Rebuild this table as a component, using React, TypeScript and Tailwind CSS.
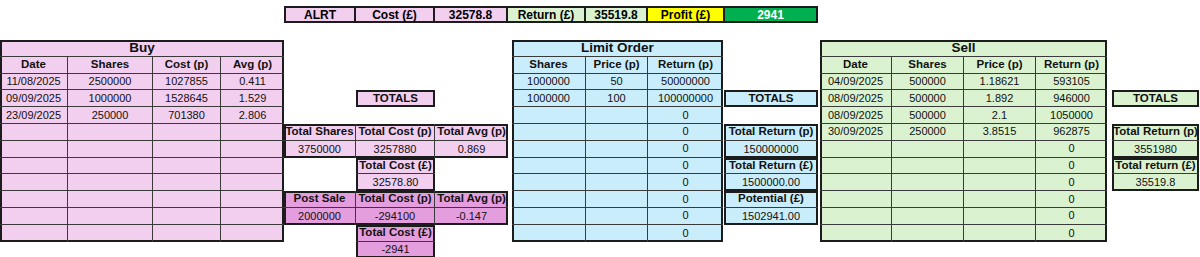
import React from "react";

type C = { t?: string; b?: boolean };

const PINK = "bg-[#f2ceef]";
const DPINK = "bg-[#e59edd]";
const BLUE = "bg-[#caedfb]";
const GREEN = "bg-[#daf2d0]";

function Box({
  cols,
  rows,
  bg,
  title,
  className = "",
}: {
  cols: string[];
  rows: C[][];
  bg: string;
  title?: string;
  className?: string;
}) {
  return (
    <div className={`${bg} shadow-[inset_0_0_0_2px_#1c1c1c] ${className}`}>
      {title && (
        <div className="flex h-[16.8px] items-center justify-center border-b border-[#3a3a3a] text-[13.5px] leading-none font-bold">
          {title}
        </div>
      )}
      {rows.map((r, i) => (
        <div
          key={i}
          className={`flex h-[16.8px] ${i < rows.length - 1 ? "border-b border-[#3a3a3a]" : ""}`}
        >
          {r.map((c, j) => (
            <div
              key={j}
              className={`${cols[j]} flex items-center justify-center overflow-hidden whitespace-nowrap leading-none ${
                j < r.length - 1 ? "border-r border-[#3a3a3a]" : ""
              } ${c.b ? "text-[11.5px] font-bold" : ""}`}
            >
              {c.t}
            </div>
          ))}
        </div>
      ))}
    </div>
  );
}

const v = (t = ""): C => ({ t });
const h = (t: string): C => ({ t, b: true });

const buyRows: C[][] = [
  [h("Date"), h("Shares"), h("Cost (p)"), h("Avg (p)")],
  [v("11/08/2025"), v("2500000"), v("1027855"), v("0.411")],
  [v("09/09/2025"), v("1000000"), v("1528645"), v("1.529")],
  [v("23/09/2025"), v("250000"), v("701380"), v("2.806")],
  ...Array.from({ length: 7 }, () => [v(), v(), v(), v()]),
];

const limitRows: C[][] = [
  [h("Shares"), h("Price (p)"), h("Return (p)")],
  [v("1000000"), v("50"), v("50000000")],
  [v("1000000"), v("100"), v("100000000")],
  ...Array.from({ length: 8 }, () => [v(), v(), v("0")]),
];

const sellRows: C[][] = [
  [h("Date"), h("Shares"), h("Price (p)"), h("Return (p)")],
  [v("04/09/2025"), v("500000"), v("1.18621"), v("593105")],
  [v("08/09/2025"), v("500000"), v("1.892"), v("946000")],
  [v("08/09/2025"), v("500000"), v("2.1"), v("1050000")],
  [v("30/09/2025"), v("250000"), v("3.8515"), v("962875")],
  ...Array.from({ length: 6 }, () => [v(), v(), v(), v("0")]),
];

function TopCell({
  w,
  bg,
  text,
  last,
  white,
}: {
  w: string;
  bg: string;
  text: string;
  last?: boolean;
  white?: boolean;
}) {
  return (
    <div
      className={`${w} ${bg} flex items-center justify-center leading-none ${
        last ? "" : "border-r-2 border-[#1c1c1c]"
      } ${white ? "text-white" : "text-black"}`}
    >
      {text}
    </div>
  );
}

export default function App() {
  return (
    <div className="h-[257px] w-[1200px] overflow-hidden bg-white pt-[6.4px] font-['Liberation_Sans',Arial,sans-serif] text-[11px] text-[#111]">
      {/* Top summary bar */}
      <div className="ml-[284px] flex h-[16.8px] w-[534px] border-2 border-[#1c1c1c] text-[12px] font-bold">
        <TopCell w="w-[70px]" bg={PINK} text="ALRT" />
        <TopCell w="w-[79px]" bg={PINK} text="Cost (£)" />
        <TopCell w="w-[73px]" bg={PINK} text="32578.8" />
        <TopCell w="w-[78px]" bg={GREEN} text="Return (£)" />
        <TopCell w="w-[62px]" bg={GREEN} text="35519.8" />
        <TopCell w="w-[77px]" bg="bg-[#ffff00]" text="Profit (£)" />
        <TopCell w="flex-1" bg="bg-[#00b050]" text="2941" last white />
      </div>

      <div className="h-[16.8px]" />

      <div className="flex items-start">
        {/* Buy */}
        <Box
          className="w-[284px]"
          bg={PINK}
          title="Buy"
          cols={["w-[68px]", "w-[85px]", "w-[68px]", "flex-1"]}
          rows={buyRows}
        />

        {/* Buy totals */}
        <div className="flex w-[224px] flex-col">
          <div className="h-[50.4px]" />
          <Box
            className="ml-[72px] w-[79px]"
            bg={PINK}
            cols={["flex-1"]}
            rows={[[h("TOTALS")]]}
          />
          <div className="h-[16.8px]" />
          <Box
            className="w-[224px]"
            bg={PINK}
            cols={["w-[72px]", "w-[79px]", "flex-1"]}
            rows={[
              [h("Total Shares"), h("Total Cost (p)"), h("Total Avg (p)")],
              [v("3750000"), v("3257880"), v("0.869")],
            ]}
          />
          <Box
            className="ml-[72px] w-[79px]"
            bg={PINK}
            cols={["flex-1"]}
            rows={[[h("Total Cost (£)")], [v("32578.80")]]}
          />
          <Box
            className="w-[224px]"
            bg={DPINK}
            cols={["w-[72px]", "w-[79px]", "flex-1"]}
            rows={[
              [h("Post Sale"), h("Total Cost (p)"), h("Total Avg (p)")],
              [v("2000000"), v("-294100"), v("-0.147")],
            ]}
          />
          <Box
            className="ml-[72px] w-[79px]"
            bg={DPINK}
            cols={["flex-1"]}
            rows={[[h("Total Cost (£)")], [v("-2941")]]}
          />
        </div>

        <div className="w-[4px]" />

        {/* Limit Order */}
        <Box
          className="w-[211px]"
          bg={BLUE}
          title="Limit Order"
          cols={["w-[74px]", "w-[62px]", "flex-1"]}
          rows={limitRows}
        />

        {/* Limit totals */}
        <div className="flex w-[95px] flex-col pl-[1px]">
          <div className="h-[50.4px]" />
          <Box bg={BLUE} cols={["flex-1"]} rows={[[h("TOTALS")]]} />
          <div className="h-[16.8px]" />
          <Box
            bg={BLUE}
            cols={["flex-1"]}
            rows={[[h("Total Return (p)")], [v("150000000")]]}
          />
          <Box
            bg={BLUE}
            cols={["flex-1"]}
            rows={[[h("Total Return (£)")], [v("1500000.00")]]}
          />
          <Box
            bg={BLUE}
            cols={["flex-1"]}
            rows={[[h("Potential (£)")], [v("1502941.00")]]}
          />
        </div>

        <div className="w-[2px]" />

        {/* Sell */}
        <Box
          className="w-[287px]"
          bg={GREEN}
          title="Sell"
          cols={["w-[72px]", "w-[72px]", "w-[72px]", "flex-1"]}
          rows={sellRows}
        />

        <div className="w-[5px]" />

        {/* Sell totals */}
        <div className="flex w-[87px] flex-col">
          <div className="h-[50.4px]" />
          <Box bg={GREEN} cols={["flex-1"]} rows={[[h("TOTALS")]]} />
          <div className="h-[16.8px]" />
          <Box
            bg={GREEN}
            cols={["flex-1"]}
            rows={[[h("Total Return (p)")], [v("3551980")]]}
          />
          <Box
            bg={GREEN}
            cols={["flex-1"]}
            rows={[[h("Total return (£)")], [v("35519.8")]]}
          />
        </div>
      </div>
    </div>
  );
}
